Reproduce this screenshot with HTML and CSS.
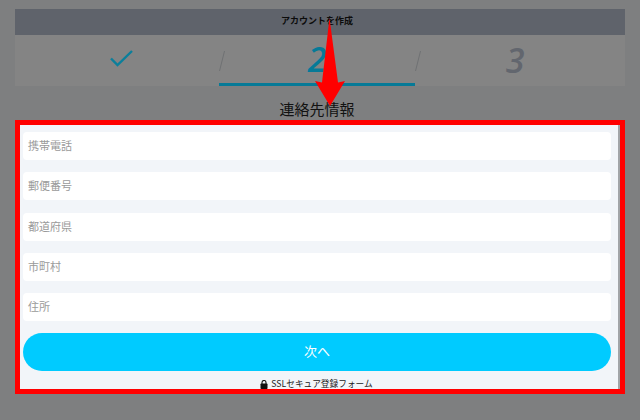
FILE: index.html
```html
<!DOCTYPE html>
<html lang="ja">
<head>
<meta charset="utf-8">
<title>アカウントを作成</title>
<link rel="stylesheet" href="styles.css">
</head>
<body>
<main class="page">
  <header class="top">アカウントを作成</header>
  <div class="steps">
    <div class="step step-done">
      <svg width="24" height="18" viewBox="0 0 24 18"><path d="M1 8.500L7.500 15L22 1" fill="none" stroke="#0b7f9b" stroke-width="2.400"/></svg>
    </div>
    <div class="step step-active"><span class="num">2</span></div>
    <div class="step step-last"><span class="num num-off">3</span></div>
    <svg class="slash slash-a" width="6" height="22" viewBox="0 0 6 22"><path d="M5.500 1L0.500 21" stroke="#6f7173" fill="none"/></svg>
    <svg class="slash slash-b" width="6" height="22" viewBox="0 0 6 22"><path d="M5.500 1L0.500 21" stroke="#6f7173" fill="none"/></svg>
  </div>
  <h1 class="title">連絡先情報</h1>
  <form class="form">
    <div class="field">携帯電話</div>
    <div class="field">郵便番号</div>
    <div class="field">都道府県</div>
    <div class="field">市町村</div>
    <div class="field">住所</div>
    <div class="next">次へ</div>
    <div class="secure">
      <svg width="8" height="9" viewBox="0 0 8 9"><path d="M2 4V2.500a2 2 0 0 1 4 0V4" fill="none" stroke="#111" stroke-width="1.100"/><rect x="0.500" y="3.500" width="7" height="5.500" rx="0.800" fill="#111"/></svg>
      <span>SSLセキュア登録フォーム</span>
    </div>
  </form>
  <svg class="arrow" width="30" height="88" viewBox="0 0 30 88"><path d="M14.500 0L23 64.500L30 63L15 88L0 63L7 64.500Z" fill="#f00"/></svg>
</main>
</body>
</html>
```
FILE: styles.css
```css
* { box-sizing: border-box; }
html, body { margin: 0; height: 100%; }
body {
  background: #7e7f80;
  font-family: "Noto Sans CJK JP", "Noto Sans", sans-serif;
  overflow: hidden;
}
.page {
  position: relative;
  width: 610px;
  margin: 0 auto;
  padding-top: 9px;
}
.top {
  height: 26px;
  padding-right: 6px;
  background: #5f636b;
  color: #0c0c0c;
  font-size: 9px;
  font-weight: 700;
  line-height: 23px;
  text-align: center;
}
.steps {
  position: relative;
  display: grid;
  grid-template-columns: 204px 196px 210px;
  height: 51px;
  background: #848484;
}
.step {
  display: flex;
  align-items: center;
  justify-content: center;
  height: 51px;
  padding-bottom: 5px;
}
.step-done { padding: 0 0 4px 10px; }
.step-active { border-bottom: 3px solid #067a97; padding-bottom: 0; }
.step-last { padding: 0 10px 2px 0; }
.num {
  font-family: "Open Sans", sans-serif;
  font-size: 34px;
  font-style: italic;
  font-weight: 600;
  line-height: 40px;
  color: #067a97;
}
.num-off { color: #62666e; }
.slash {
  position: absolute;
  top: 15px;
}
.slash-a { left: 204px; }
.slash-b { left: 400px; }
.title {
  margin: 0;
  height: 34px;
  padding: 12px 6px 0 0;
  font-size: 15px;
  font-weight: 400;
  line-height: 22px;
  text-align: center;
  color: #121212;
}
.form {
  height: 274px;
  border: 5px solid #f00;
  background: #f2f5f9;
  padding: 7px 9px 0 3px;
  display: flex;
  flex-direction: column;
  overflow: hidden;
  box-shadow: inset -2px 0 0 #a2a5a8;
}
.field {
  flex: none;
  height: 28px;
  margin-bottom: 12.250px;
  padding-left: 5px;
  background: #fff;
  border-radius: 4px;
  font-size: 11px;
  line-height: 26px;
  color: #9a9a9a;
}
.next {
  flex: none;
  height: 38px;
  border-radius: 19px;
  background: #00cbff;
  color: #fff;
  font-size: 13px;
  line-height: 36px;
  text-align: center;
}
.secure {
  display: flex;
  align-items: center;
  justify-content: center;
  gap: 3px;
  margin-top: 6px;
  padding-right: 1px;
  font-size: 8.700px;
  line-height: 14px;
  color: #222;
}
.arrow {
  position: absolute;
  left: 300px;
  top: 18px;
}
```
